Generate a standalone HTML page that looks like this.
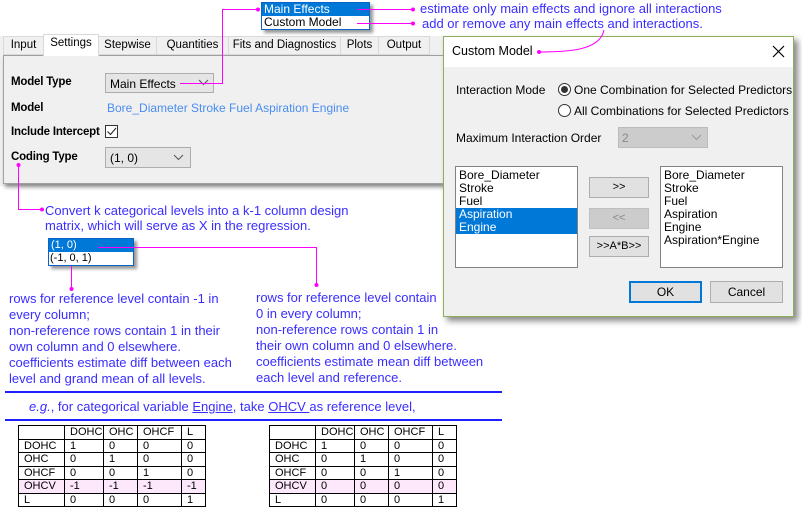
<!DOCTYPE html>
<html><head><meta charset="utf-8"><style>
*{margin:0;padding:0;box-sizing:border-box}
body{width:802px;height:508px;background:#fff;position:relative;overflow:hidden;font-family:"Liberation Sans",Arial,sans-serif;font-size:12px;color:#000}
.a{position:absolute;white-space:nowrap}
.ui{font-family:"Liberation Sans",Arial,sans-serif;font-size:12px}
.bl{color:#3a2dff;font-size:13px;font-family:"Liberation Sans",Arial,sans-serif}
.tab{position:absolute;top:36px;height:19px;border:1px solid #d9d9d9;background:#f0f0f0;padding:2px 0 0 0;text-align:center;font-size:11.5px}
.btn{position:absolute;background:#e1e1e1;border:1px solid #adadad;text-align:center}
table{position:absolute;border-collapse:collapse;font-size:11px;font-family:"Liberation Sans",Arial,sans-serif;table-layout:fixed}
td{border:1px solid #000;height:13.5px;padding:0 0 0 5px;line-height:12px}
tr.p td{background:#fde8fb}
.lb{font-weight:bold;font-size:11.5px;letter-spacing:-0.2px}
</style></head><body>
<div class="a" style="left:261px;top:2px;width:109px;height:28px;border:1px solid #0a64c8;background:#fff;box-shadow:3px 3px 3px #999"></div>
<div class="a ui" style="left:262px;top:3px;width:107px;height:13px;background:#0078d7;color:#fff;padding-left:2px;line-height:13px">Main Effects</div>
<div class="a ui" style="left:264px;top:16px;line-height:13px">Custom Model</div>
<div class="a bl" style="left:420px;top:1px">estimate only main effects and ignore all interactions</div>
<div class="a bl" style="left:422px;top:16px">add or remove any main effects and interactions.</div>
<div class="a" style="left:0;top:36px;width:445px;height:150px;background:#f0f0f0"></div>
<div class="a" style="left:3px;top:55px;width:460px;height:129px;border:1px solid #a0a0a0;background:#f0f0f0;box-shadow:2px 3px 4px #888"></div>
<div class="tab ui" style="left:3px;width:41px">Input</div>
<div class="tab ui" style="left:43px;width:56px;top:34px;height:22px;background:#fff;border-bottom:none">Settings</div>
<div class="tab ui" style="left:98px;width:59px">Stepwise</div>
<div class="tab ui" style="left:156px;width:73px">Quantities</div>
<div class="tab ui" style="left:228px;width:113px">Fits and Diagnostics</div>
<div class="tab ui" style="left:340px;width:39px">Plots</div>
<div class="tab ui" style="left:378px;width:52px">Output</div>
<div class="a ui lb" style="left:11px;top:76px">Model Type</div>
<div class="a ui" style="left:105px;top:73px;width:109px;height:20px;background:#e5e5e5;border:1px solid #adadad;padding:3px 0 0 4px">Main Effects</div>
<div class="a ui lb" style="left:11px;top:102px">Model</div>
<div class="a ui" style="left:107px;top:101px;color:#4a8df0">Bore_Diameter Stroke Fuel Aspiration Engine</div>
<div class="a ui lb" style="left:11px;top:126px">Include Intercept</div>
<div class="a" style="left:105px;top:125px;width:13px;height:13px;border:1px solid #333;background:#fff"></div>
<svg class="a" style="left:105px;top:125px" width="13" height="13"><path d="M2.5 6.5 L5.5 9.5 L11 3" stroke="#333" fill="none" stroke-width="1.2"/></svg>
<div class="a ui lb" style="left:11px;top:151px">Coding Type</div>
<div class="a ui" style="left:105px;top:147px;width:86px;height:21px;background:#e5e5e5;border:1px solid #adadad;padding:3px 0 0 4px">(1, 0)</div>
<svg class="a" style="left:173px;top:154px" width="12" height="8"><path d="M1 1 L5.5 5.5 L10 1" stroke="#555" fill="none"/></svg>
<svg class="a" style="left:198px;top:79px" width="12" height="8"><path d="M1 1 L5.5 5.5 L10 1" stroke="#555" fill="none"/></svg>
<div class="a bl" style="left:45px;top:203px">Convert k categorical levels into a k-1 column design</div>
<div class="a bl" style="left:45px;top:218px">matrix, which will serve as X in the regression.</div>
<div class="a" style="left:48px;top:238px;width:86px;height:28px;border:1px solid #0a64c8;background:#fff;box-shadow:3px 3px 3px #999"></div>
<div class="a" style="left:49px;top:239px;width:84px;height:13px;background:#0078d7;color:#fff;font-size:11px;padding-left:2px;line-height:13px">(1, 0)</div>
<div class="a" style="left:50px;top:252px;font-size:11px;line-height:13px">(-1, 0, 1)</div>
<div class="a bl" style="left:9px;top:291px;line-height:16px">rows for reference level contain -1 in<br>every column;<br>non-reference rows contain 1 in their<br>own column and 0 elsewhere.<br>coefficients estimate diff between each<br>level and grand mean of all levels.</div>
<div class="a bl" style="left:256px;top:290px;line-height:16px">rows for reference level contain<br>0 in every column;<br>non-reference rows contain 1 in<br>their own column and 0 elsewhere.<br>coefficients estimate mean diff between<br>each level and reference.</div>
<div class="a" style="left:5px;top:391px;width:497px;height:2px;background:#2020ff"></div>
<div class="a" style="left:5px;top:419px;width:497px;height:2px;background:#2020ff"></div>
<div class="a bl" style="left:29px;top:399px"><i>e.g.</i>, for categorical variable <u>Engine</u>, take <u>OHCV </u>as reference level,</div>
<table style="left:18px;top:425px;width:187px">
<colgroup><col style="width:46px"><col style="width:39px"><col style="width:34px"><col style="width:44px"><col style="width:24px"></colgroup>
<tr><td></td><td>DOHC</td><td>OHC</td><td>OHCF</td><td>L</td></tr>
<tr><td>DOHC</td><td>1</td><td>0</td><td>0</td><td>0</td></tr>
<tr><td>OHC</td><td>0</td><td>1</td><td>0</td><td>0</td></tr>
<tr><td>OHCF</td><td>0</td><td>0</td><td>1</td><td>0</td></tr>
<tr class="p"><td>OHCV</td><td>-1</td><td>-1</td><td>-1</td><td>-1</td></tr>
<tr><td>L</td><td>0</td><td>0</td><td>0</td><td>1</td></tr></table>
<table style="left:269px;top:425px;width:187px">
<colgroup><col style="width:46px"><col style="width:39px"><col style="width:34px"><col style="width:44px"><col style="width:24px"></colgroup>
<tr><td></td><td>DOHC</td><td>OHC</td><td>OHCF</td><td>L</td></tr>
<tr><td>DOHC</td><td>1</td><td>0</td><td>0</td><td>0</td></tr>
<tr><td>OHC</td><td>0</td><td>1</td><td>0</td><td>0</td></tr>
<tr><td>OHCF</td><td>0</td><td>0</td><td>1</td><td>0</td></tr>
<tr class="p"><td>OHCV</td><td>0</td><td>0</td><td>0</td><td>0</td></tr>
<tr><td>L</td><td>0</td><td>0</td><td>0</td><td>1</td></tr></table>
<div class="a" style="left:443px;top:36px;width:351px;height:281px;border:1px solid #8cb05a;background:#f0f0f0;box-shadow:4px 4px 6px #888"></div>
<div class="a" style="left:444px;top:37px;width:349px;height:30px;background:#fff"></div>
<div class="a ui" style="left:452px;top:44px;font-size:12.5px">Custom Model</div>
<svg class="a" style="left:772px;top:45px" width="13" height="13"><path d="M1 1 L12 12 M12 1 L1 12" stroke="#000" stroke-width="1.2"/></svg>
<div class="a ui" style="left:456px;top:83px">Interaction Mode</div>
<div class="a" style="left:558px;top:83px;width:13px;height:13px;border:1px solid #333;border-radius:50%;background:#fff"></div>
<div class="a" style="left:561px;top:86px;width:7px;height:7px;border-radius:50%;background:#333"></div>
<div class="a ui" style="left:574px;top:83px">One Combination for Selected Predictors</div>
<div class="a" style="left:558px;top:104px;width:13px;height:13px;border:1px solid #333;border-radius:50%;background:#fff"></div>
<div class="a ui" style="left:574px;top:104px">All Combinations for Selected Predictors</div>
<div class="a ui" style="left:456px;top:131px">Maximum Interaction Order</div>
<div class="a ui" style="left:618px;top:127px;width:90px;height:21px;background:#ccc;border:1px solid #bbb;color:#888;padding:3px 0 0 3px">2</div>
<svg class="a" style="left:691px;top:134px" width="12" height="8"><path d="M1 1 L5.5 5.5 L10 1" stroke="#999" fill="none"/></svg>
<div class="a ui" style="left:455px;top:166px;width:123px;height:102px;border:1px solid #828282;background:#fff;line-height:13px;padding-top:2px">
<div style="padding-left:3px">Bore_Diameter</div><div style="padding-left:3px">Stroke</div><div style="padding-left:3px">Fuel</div>
<div style="padding-left:3px;background:#0078d7;color:#fff">Aspiration</div><div style="padding-left:3px;background:#0078d7;color:#fff">Engine</div></div>
<div class="a ui" style="left:660px;top:166px;width:123px;height:102px;border:1px solid #828282;background:#fff;line-height:13px;padding:2px 0 0 3px">Bore_Diameter<br>Stroke<br>Fuel<br>Aspiration<br>Engine<br>Aspiration*Engine</div>
<div class="btn ui" style="left:589px;top:177px;width:60px;height:21px;line-height:19px;font-size:11px">&gt;&gt;</div>
<div class="btn ui" style="left:589px;top:208px;width:60px;height:21px;line-height:19px;background:#ccc;border-color:#bfbfbf;color:#888;font-size:11px">&lt;&lt;</div>
<div class="btn ui" style="left:589px;top:236px;width:60px;height:21px;line-height:19px;font-size:11px">&gt;&gt;A*B&gt;&gt;</div>
<div class="btn ui" style="left:629px;top:281px;width:73px;height:22px;line-height:18px;border:2px solid #0078d7">OK</div>
<div class="btn ui" style="left:710px;top:281px;width:73px;height:22px;line-height:20px">Cancel</div>
<svg class="a" style="left:0;top:0" width="802" height="508">
<g stroke="#ff00ff" fill="none" stroke-width="1">
<path d="M180 83.5 H222.5 V9.5 H257"/>
<path d="M357 9.5 H413"/><path d="M357 23.5 H413"/>
<path d="M18.5 165 V209.5 H41"/>
<path d="M539 52 C570 52 600 50 604 30"/>
<path d="M98 247.5 H316.5 V285"/>
<path d="M71.5 266 V289"/>
</g>
<g fill="#ff00ff">
<circle cx="258" cy="9.5" r="2"/><circle cx="413" cy="9.5" r="2"/><circle cx="413" cy="23.5" r="2"/>
<circle cx="18.5" cy="165" r="2"/><circle cx="42" cy="209.5" r="2"/><circle cx="539" cy="52" r="2"/>
<circle cx="316.5" cy="285" r="2"/><circle cx="71.5" cy="289" r="2"/>
</g></svg>
</body></html>
